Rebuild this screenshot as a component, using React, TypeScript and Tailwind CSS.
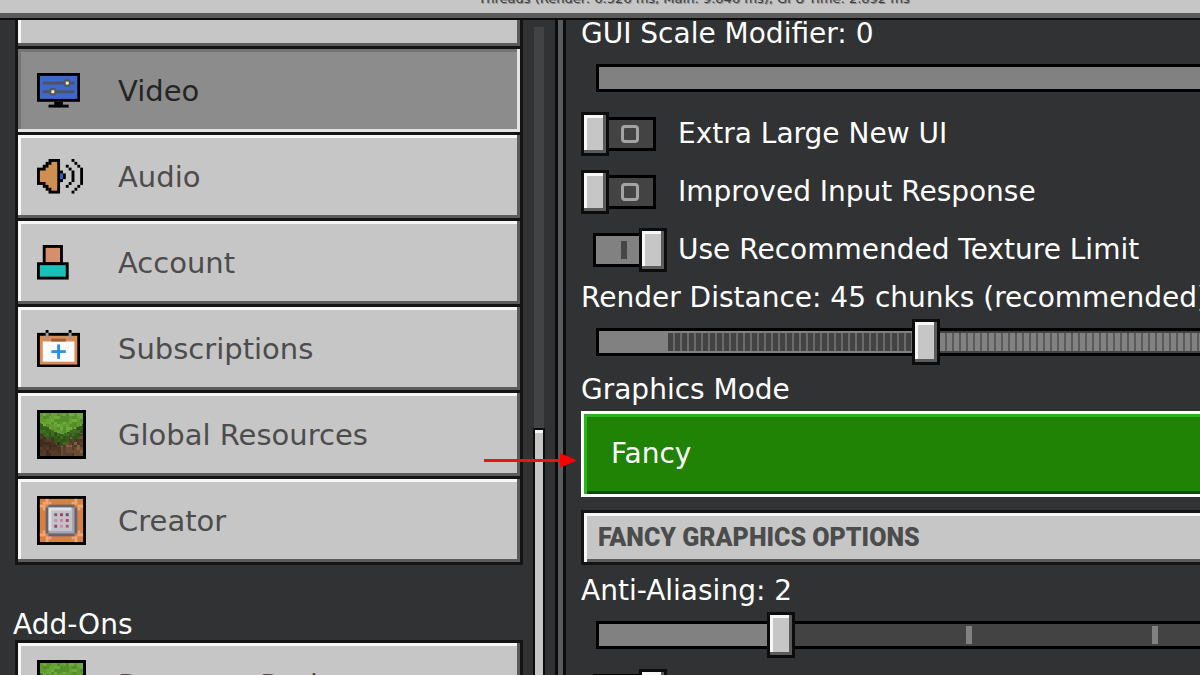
import { useState } from "react";
import type { ReactNode } from "react";

type Cell = [x: number, y: number, w: number, h: number, fill: string];

function PixelIcon({
  cols,
  rows,
  cells,
  crisp = false,
}: {
  cols: number;
  rows: number;
  cells: Cell[];
  crisp?: boolean;
}) {
  return (
    <svg
      viewBox={`0 0 ${cols} ${rows}`}
      width={cols * 2.88}
      height={rows * 2.88}
      shapeRendering={crisp ? "crispEdges" : "auto"}
      aria-hidden="true"
    >
      {cells.map(([x, y, w, h, fill], i) => (
        <rect key={i} x={x} y={y} width={w} height={h} fill={fill} />
      ))}
    </svg>
  );
}

const K = "#000000";

const videoCells: Cell[] = [
  [0, 0, 15, 10, K],
  [1, 1, 13, 8, "#3f68c9"],
  [2, 3, 11, 1, "#4c5366"],
  [9, 3, 3, 1, "#55565c"],
  [9.5, 2.2, 2, 2.6, "#55565c"],
  [10, 3, 1, 1, "#f6efe4"],
  [2, 6, 11, 1, "#4c5366"],
  [4, 6, 3, 1, "#55565c"],
  [4.5, 5.2, 2, 2.6, "#55565c"],
  [5, 6, 1, 1, "#f6efe4"],
  [6, 10, 3, 1.1, K],
  [4, 11, 7, 1, K],
];

const ORANGE = "#d08e52";
const audioCells: Cell[] = [
  [4, 0, 4, 12, K],
  [3, 1, 1.1, 10, K],
  [2, 2, 1.1, 8, K],
  [0, 3, 2.1, 6, K],
  [1, 4, 5, 4, ORANGE],
  [3, 3, 3, 6, ORANGE],
  [4, 2, 3, 8, ORANGE],
  [5, 1, 2, 10, ORANGE],
  [8, 4, 1, 4, K],
  [9, 5, 1, 2, K],
  [8, 5, 1, 2, "#2b62d9"],
  [10, 2, 1, 1, K],
  [11, 3, 1, 1, K],
  [12, 4, 1, 4, K],
  [11, 8, 1, 1, K],
  [10, 9, 1, 1, K],
  [12, 0, 1, 1, K],
  [13, 1, 1, 1, K],
  [14, 2, 1, 1, K],
  [15, 3, 1, 6, K],
  [14, 9, 1, 1, K],
  [13, 10, 1, 1, K],
  [12, 11, 1, 1, K],
];

const accountCells: Cell[] = [
  [2, 0, 7, 7, K],
  [3, 1, 5, 5, "#d5906b"],
  [0, 6, 11, 6, K],
  [1, 7, 9, 4, "#1abfb8"],
];

const subscriptionCells: Cell[] = [
  [0, 1, 15, 12, K],
  [1, 2, 13, 10, "#d98c58"],
  [2, 4, 11, 7, "#fbfbfb"],
  [5, 3, 5, 1, "#9c6039"],
  [3, 0, 1, 1, K],
  [11, 0, 1, 1, K],
  [3, 1, 1, 2, "#9b9b9b"],
  [11, 1, 1, 2, "#9b9b9b"],
  [7, 5, 1, 5, "#2f8fe4"],
  [5, 7, 5, 1, "#2f8fe4"],
];

const greens = ["#5f9a2f", "#66a234", "#578e2c", "#6dab3b"];
const darkGreens = ["#35601c", "#2f541a", "#3f6d22"];
const soilsLeft = ["#4a3423", "#553c29", "#3f2c1d"];
const soilsRight = ["#6b4b33", "#5a3f2b", "#80603f", "#4f3827"];

function noise(x: number, y: number) {
  const n = Math.sin(x * 12.9898 + y * 78.233) * 43758.5453;
  return n - Math.floor(n);
}

function pick(list: string[], n: number) {
  return list[Math.floor(n * list.length)];
}

// block seen from its corner: grass on top, a dark lip, then soil
function grassBlock(): Cell[] {
  const cells: Cell[] = [[0, 0, 17, 17, K]];
  for (let r = 0; r < 30; r++) {
    for (let c = 0; c < 30; c++) {
      const x = 1 + c / 2;
      const y = 1 + r / 2;
      const edge = 8.4 - Math.abs(x - 8.5) * 0.52;
      const n = noise(c >> 1, r >> 1);
      const lip = 2.2 + noise(c >> 1, 40) * 2.2;
      let fill = x < 8.5 ? pick(soilsLeft, n) : pick(soilsRight, n);
      if (y < edge) fill = pick(greens, n);
      else if (y < edge + lip) fill = pick(darkGreens, n);
      cells.push([x, y, 0.5, 0.5, fill]);
    }
  }
  return cells;
}

const grassCells = grassBlock();

const PEACH = "#efa678";
const creatorCells: Cell[] = [
  [0, 0, 17, 17, K],
  [1, 1, 15, 15, "#d7803f"],
  [3, 1, 1, 2, PEACH],
  [1, 3, 2, 1, PEACH],
  [2, 2, 1, 1, PEACH],
  [4, 2, 1, 1, PEACH],
  [2, 4, 1, 1, PEACH],
  [13, 1, 1, 2, PEACH],
  [14, 3, 2, 1, PEACH],
  [12, 2, 1, 1, PEACH],
  [14, 4, 1, 1, PEACH],
  [3, 14, 1, 2, PEACH],
  [1, 13, 2, 1, PEACH],
  [4, 14, 1, 1, PEACH],
  [2, 12, 1, 1, PEACH],
  [13, 14, 1, 2, PEACH],
  [14, 13, 2, 1, PEACH],
  [12, 14, 1, 1, PEACH],
  [14, 12, 1, 1, PEACH],
  [4, 3, 9, 11, "#66646c"],
  [3, 4, 11, 9, "#66646c"],
  [4, 4, 9, 9, "#a7a6b1"],
  [4, 4, 8, 8, "#e0dfe6"],
  [5, 5, 7, 7, "#c3c1cc"],
  [6, 6, 1, 1, "#80586a"],
  [8, 6, 1, 1, "#a03f5c"],
  [10, 6, 1, 1, "#655560"],
  [6, 8, 1, 1, "#c78f9e"],
  [8, 8, 1, 1, "#cf8391"],
  [10, 8, 1, 1, "#a8455f"],
  [6, 10, 1, 1, "#9c3f5c"],
  [8, 10, 1, 1, "#d38f9b"],
  [10, 10, 1, 1, "#a85a70"],
];

const menu = [
  { id: "video", label: "Video", icon: <PixelIcon cols={15} rows={12} cells={videoCells} /> },
  { id: "audio", label: "Audio", icon: <PixelIcon cols={16} rows={12} cells={audioCells} /> },
  { id: "account", label: "Account", icon: <PixelIcon cols={11} rows={12} cells={accountCells} /> },
  { id: "subs", label: "Subscriptions", icon: <PixelIcon cols={15} rows={13} cells={subscriptionCells} /> },
  { id: "global", label: "Global Resources", icon: <PixelIcon cols={17} rows={17} cells={grassCells} crisp /> },
  { id: "creator", label: "Creator", icon: <PixelIcon cols={17} rows={17} cells={creatorCells} /> },
];

function MenuButton({
  label,
  icon,
  active = false,
  onClick,
}: {
  label: string;
  icon: ReactNode;
  active?: boolean;
  onClick?: () => void;
}) {
  return (
    <div className="border-t-3 border-[#141415]">
      <button
        onClick={onClick}
        className={`flex w-full h-[83px] items-center gap-8 pl-[19px] text-left text-[29px] leading-7 ${
          active
            ? "bg-[#8c8c8c] text-[#242425] shadow-[inset_-3px_-3px_0_#e3e3e3,inset_3px_3px_0_#747474]"
            : "bg-[#c6c6c6] text-[#4c4c4d] shadow-[inset_-3px_-3px_0_#5b5b5c,inset_3px_3px_0_#f7f7f7]"
        }`}
      >
        <span className="w-[49px] shrink-0">{icon}</span>
        <span className="whitespace-nowrap">{label}</span>
      </button>
    </div>
  );
}

const knob =
  "border-3 border-[#0c0c0d] bg-[#c6c6c6] shadow-[inset_-3px_-3px_0_#5b5b5c,inset_3px_3px_0_#f7f7f7]";

function Toggle({ label, initial = false }: { label: string; initial?: boolean }) {
  const [on, setOn] = useState(initial);

  return (
    <label className="flex h-11 cursor-pointer items-center">
      <input
        type="checkbox"
        className="sr-only"
        checked={on}
        onChange={(e) => setOn(e.target.checked)}
      />
      {on ? (
        <span className="flex w-[97px] shrink-0 items-center pl-3">
          <span className="flex h-[34px] w-[46px] items-center justify-end border-3 border-r-0 border-black bg-[#818181] pr-3">
            <span className="h-[18px] w-[6px] bg-[#464646]" />
          </span>
          <span className={`h-11 w-7 ${knob}`} />
        </span>
      ) : (
        <span className="flex w-[97px] shrink-0 items-center">
          <span className={`h-11 w-7 ${knob}`} />
          <span className="flex h-[34px] w-[47px] items-center border-3 border-l-0 border-black bg-[#434343] pl-3">
            <span className="h-[18px] w-[18px] rounded-sm border-3 border-[#a3a3a3]" />
          </span>
        </span>
      )}
      <span className="whitespace-nowrap">{label}</span>
    </label>
  );
}

function Slider({
  label,
  value,
  ticks = [],
  fine = false,
}: {
  label: string;
  value: number;
  ticks?: number[];
  fine?: boolean;
}) {
  const [pos, setPos] = useState(value);

  return (
    <div className="flex flex-col gap-4">
      <span className="h-7 whitespace-nowrap">{label}</span>
      <div className="relative ml-[15px] h-7 border-y-3 border-l-3 border-black bg-[#434343]">
        <div className="h-full bg-[#818181]" style={{ width: `${pos}%` }} />
        {fine && (
          <>
            <div
              className="absolute inset-y-[2px] left-[69px] bg-[repeating-linear-gradient(90deg,#434343_0_5px,#6a6a6a_5px_7px)]"
              style={{ right: `${100 - pos}%` }}
            />
            <div
              className="absolute inset-y-[2px] right-0 bg-[repeating-linear-gradient(90deg,#818181_0_5px,#5a5a5a_5px_7px)]"
              style={{ left: `${pos}%` }}
            />
          </>
        )}
        {ticks.map((t) => (
          <span
            key={t}
            className="absolute inset-y-[2px] w-[6px] bg-[#818181]"
            style={{ left: `${t}%` }}
          />
        ))}
        {pos < 100 && (
          <span
            className={`absolute -top-3 h-[46px] w-7 ${knob}`}
            style={{ left: `${pos}%` }}
          />
        )}
        <input
          type="range"
          aria-label={label}
          min={0}
          max={100}
          step="any"
          value={pos}
          onChange={(e) => setPos(Number(e.target.value))}
          className="absolute inset-0 w-full cursor-pointer opacity-0"
        />
      </div>
    </div>
  );
}

export default function App() {
  const [section, setSection] = useState("video");

  return (
    <div className="relative flex h-screen flex-col overflow-hidden bg-[#313233] font-['DejaVu_Sans',sans-serif] text-[28px] leading-7 text-white">
      <header className="flex h-5 shrink-0 items-start justify-center border-b-2 border-[#0c0c0d] bg-[#c6c6c6] shadow-[inset_0_-5px_0_#5b5b5c]">
        <p className="-mt-[11px] ml-[188px] whitespace-nowrap text-[13px] leading-5 text-[#3c3c3d] text-shadow-[1px_1px_0_#8c8c8c]">
          Threads (Render: 6.526 ms, Main: 9.846 ms), GPU Time: 2.892 ms
        </p>
      </header>

      <div className="flex min-h-0 flex-1">
        <aside className="flex w-[46.25%] shrink-0 overflow-hidden pl-[13px]">
          <div className="min-w-0 flex-1">
            <nav className="ml-[2px] border-x-3 border-b-3 border-[#141415]">
              <div className="h-[26px] bg-[#c6c6c6] shadow-[inset_-3px_-3px_0_#5b5b5c,inset_3px_0_0_#f7f7f7]" />
              {menu.map((m) => (
                <MenuButton
                  key={m.id}
                  label={m.label}
                  icon={m.icon}
                  active={section === m.id}
                  onClick={() => setSection(m.id)}
                />
              ))}
            </nav>
            <h2 className="mt-[46px] h-[29px]">Add-Ons</h2>
            <nav className="ml-[2px] border-x-3 border-[#141415]">
              <MenuButton
                label="Resource Packs"
                icon={<PixelIcon cols={17} rows={17} cells={grassCells} crisp />}
              />
            </nav>
          </div>
          <div className="flex w-8 shrink-0 flex-col px-[10px] pt-[7px]">
            <div className="mx-px h-[401px] bg-[#424344]" />
            <div className="flex-1 border-x-2 border-t-2 border-[#0c0c0d] bg-[#c6c6c6] shadow-[inset_0_3px_0_#f7f7f7]" />
          </div>
        </aside>
        <div className="w-[11px] shrink-0 border-x-3 border-[#0c0c0d] bg-[#5b5b5c]" />

        <main className="min-w-0 flex-1 overflow-hidden pl-[15px]">
          <Slider label="GUI Scale Modifier: 0" value={100} />
          <div className="mt-5 flex flex-col gap-[14px]">
            <Toggle label="Extra Large New UI" />
            <Toggle label="Improved Input Response" />
            <Toggle label="Use Recommended Texture Limit" initial />
          </div>
          <div className="mt-3">
            <Slider label="Render Distance: 45 chunks (recommended)" value={52} fine />
          </div>
          <h3 className="mt-5">Graphics Mode</h3>
          <button className="mt-[7px] flex h-[86px] w-full items-center border-y-3 border-l-3 border-white bg-[#208306] pl-[27px] text-left shadow-[inset_3px_3px_0_#2bb51d,inset_0_-3px_0_#0b4f05]">
            Fancy
          </button>
          <div className="mt-[13px] flex h-[55px] items-center border-y-3 border-l-3 border-[#141415] bg-[#c6c6c6] pl-[14px] shadow-[inset_3px_3px_0_#f7f7f7,inset_0_-3px_0_#5b5b5c]">
            <h3 className="whitespace-nowrap font-['Roboto',sans-serif] text-[25px] font-black text-[#4c4c4d]">
              FANCY GRAPHICS OPTIONS
            </h3>
          </div>
          <div className="mt-3 mb-5">
            <Slider label="Anti-Aliasing: 2" value={28} ticks={[61, 92]} />
          </div>
          <Toggle label="Upscaling" initial />
        </main>
      </div>

      <svg
        className="pointer-events-none absolute top-[452px] left-[484px]"
        width="93"
        height="16"
        viewBox="0 0 93 16"
        aria-hidden="true"
      >
        <path d="M0 8.5h78" stroke="#f01010" strokeWidth="3" />
        <path d="M76 1l17 7.5-17 7z" fill="#ff0000" />
      </svg>
    </div>
  );
}
